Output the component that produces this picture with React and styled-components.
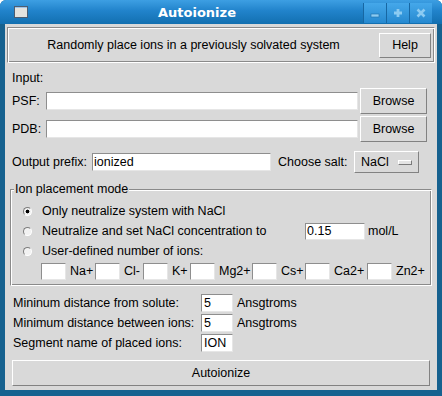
import React from "react";
import styled, { createGlobalStyle, css } from "styled-components";

const GlobalStyle = createGlobalStyle`
  html, body {
    margin: 0;
    padding: 0;
    background: #ffffff;
  }
  body {
    font-family: "Liberation Sans", Arial, sans-serif;
    font-size: 12.5px;
    color: #000;
  }
`;

// tk-like relief helpers
const groove = css`
  border: 1px solid;
  border-color: #8a8a8a #ffffff #ffffff #8a8a8a;
  box-shadow: inset 1px 1px 0 #ffffff, inset -1px -1px 0 #8a8a8a;
`;

const Window = styled.div`
  width: 442px;
  height: 396px;
  display: flex;
  flex-direction: column;
  background: #16618f;
  border-radius: 6px 6px 0 0;
  overflow: hidden;
`;

const TitleBar = styled.div`
  height: 24px;
  flex: none;
  display: flex;
  align-items: center;
  background: linear-gradient(#3d9fe3 0%, #2183cb 45%, #126fb0 100%);
`;

const TitleIcon = styled.span`
  width: 14px;
  height: 12px;
  margin-left: 14px;
  box-sizing: border-box;
  border: 1px solid #4d5d70;
  background: #e3e3df;
  box-shadow: inset 0 1px 0 #9fc3e6;
`;

const Title = styled.div`
  flex: 1;
  text-align: center;
  padding-left: 3px;
  font-family: "DejaVu Sans", sans-serif;
  font-weight: bold;
  font-size: 13px;
  color: #ffffff;
`;

const WinButtons = styled.div`
  display: flex;
  align-self: flex-start;
  margin: 3px 10px 0 0;
`;

const WinButton = styled.span`
  width: 23px;
  height: 20px;
  box-sizing: border-box;
  border-left: 1px solid #1767a3;
  display: flex;
  align-items: center;
  justify-content: center;
  background: linear-gradient(#45a8ea, #2689d0);
  color: #8ccbf2;
`;

const Body = styled.div`
  flex: 1;
  margin: 0 5px 6px;
  background: #d9d9d9;
  display: flex;
  flex-direction: column;
`;

const TopFrame = styled.div`
  ${groove};
  height: 36px;
  box-sizing: border-box;
  margin: 3px 2px 0;
  display: flex;
  align-items: center;
`;

const Description = styled.div`
  flex: 1;
  text-align: center;
`;

const Button = styled.button`
  box-sizing: border-box;
  width: ${(p) => p.$w}px;
  height: ${(p) => p.$h || 26}px;
  padding: 0;
  border: 1px solid;
  border-color: #ffffff #828282 #828282 #ffffff;
  background: #d9d9d9;
  font: inherit;
  color: #000;
`;

const SectionLabel = styled.div`
  margin: 8px 0 0 7px;
  line-height: 14px;
`;

const Row = styled.div`
  display: flex;
  align-items: center;
  height: ${(p) => p.$h || 20}px;
  margin-top: ${(p) => p.$mt || 0}px;
  padding-left: ${(p) => p.$pl || 0}px;
`;

const Label = styled.span`
  width: ${(p) => (p.$w ? `${p.$w}px` : "auto")};
  margin-left: ${(p) => p.$ml || 0}px;
  flex: none;
  white-space: nowrap;
`;

const Entry = styled.input`
  box-sizing: border-box;
  width: ${(p) => p.$w}px;
  height: ${(p) => p.$h || 18}px;
  margin: 0;
  padding: 0 ${(p) => p.$pad || 1}px;
  border: 1px solid;
  border-color: #8e8e8e #e6e6e6 #e6e6e6 #8e8e8e;
  background: #ffffff;
  font: inherit;
  color: #000;
  outline: none;
`;

const MenuButton = styled.div`
  box-sizing: border-box;
  width: 65px;
  height: 22px;
  padding: 0 6px;
  display: flex;
  align-items: center;
  justify-content: space-between;
  border: 1px solid;
  border-color: #ffffff #828282 #828282 #ffffff;
`;

const MenuIndicator = styled.span`
  width: 14px;
  height: 5px;
  box-sizing: border-box;
  border: 1px solid;
  border-color: #ffffff #7a7a7a #7a7a7a #ffffff;
  background: #e4e4e4;
`;

const LabelFrame = styled.div`
  ${groove};
  position: relative;
  box-sizing: border-box;
  width: 422px;
  height: 97px;
  margin: 16px 0 0 5px;
  padding-top: 11px;
`;

const Legend = styled.span`
  position: absolute;
  top: -8px;
  left: 3px;
  padding: 0 1px;
  line-height: 14px;
  background: #d9d9d9;
`;

const Radio = styled.span`
  width: 9px;
  height: 9px;
  box-sizing: border-box;
  flex: none;
  margin-right: 10px;
  border-radius: 50%;
  border: 1px solid;
  border-color: #7c7c7c #ffffff #ffffff #7c7c7c;
  background: ${(p) =>
    p.$on
      ? "radial-gradient(circle, #000 0 1.6px, #f2f2f2 2.2px)"
      : "#f2f2f2"};
`;

const IonBox = styled.span`
  display: flex;
  align-items: center;
  width: ${(p) => p.$w}px;
  flex: none;
`;

const IonName = styled.span`
  margin-left: 4px;
`;

const Minus = () => (
  <svg width="10" height="10" viewBox="0 0 10 10">
    <rect x="1" y="6" width="8" height="3" fill="currentColor" stroke="#1c6ea9" strokeWidth="0.6" />
  </svg>
);

const Plus = () => (
  <svg width="10" height="10" viewBox="0 0 10 10">
    <path d="M5 1v8M1 5h8" stroke="currentColor" strokeWidth="2.8" />
  </svg>
);

const Cross = () => (
  <svg width="10" height="10" viewBox="0 0 10 10">
    <path d="M1.5 1.5l7 7M8.5 1.5l-7 7" stroke="currentColor" strokeWidth="2.6" />
  </svg>
);

const ions = [
  { name: "Na+", w: 54 },
  { name: "Cl-", w: 48 },
  { name: "K+", w: 47 },
  { name: "Mg2+", w: 62 },
  { name: "Cs+", w: 53 },
  { name: "Ca2+", w: 62 },
  { name: "Zn2+", w: 56 },
];

const App = () => {
  return (
    <Window>
      <GlobalStyle />
      <TitleBar>
        <TitleIcon />
        <Title>Autoionize</Title>
        <WinButtons>
          <WinButton>
            <Minus />
          </WinButton>
          <WinButton>
            <Plus />
          </WinButton>
          <WinButton>
            <Cross />
          </WinButton>
        </WinButtons>
      </TitleBar>

      <Body>
        {/* header with description and help */}
        <TopFrame>
          <Description>Randomly place ions in a previously solvated system</Description>
          <Button $w={52} $h={25} style={{ marginRight: 3 }}>
            Help
          </Button>
        </TopFrame>

        <SectionLabel>Input:</SectionLabel>
        <Row $h={26} $mt={3} $pl={7}>
          <Label $w={34}>PSF:</Label>
          <Entry $w={312} />
          <Button $w={67} style={{ marginLeft: 2 }}>
            Browse
          </Button>
        </Row>
        <Row $h={26} $mt={2} $pl={7}>
          <Label $w={34}>PDB:</Label>
          <Entry $w={312} />
          <Button $w={67} style={{ marginLeft: 2 }}>
            Browse
          </Button>
        </Row>

        <Row $h={22} $mt={9} $pl={7}>
          <Label $w={80}>Output prefix:</Label>
          <Entry $w={179} defaultValue="ionized" />
          <Label $w={76} $ml={7}>
            Choose salt:
          </Label>
          <MenuButton>
            NaCl
            <MenuIndicator />
          </MenuButton>
        </Row>

        {/* ion placement mode */}
        <LabelFrame>
          <Legend>Ion placement mode</Legend>
          <Row $pl={12}>
            <Radio $on />
            <Label>Only neutralize system with NaCl</Label>
          </Row>
          <Row $pl={12}>
            <Radio />
            <Label $w={263}>Neutralize and set NaCl concentration to</Label>
            <Entry $w={60} $h={17} defaultValue="0.15" />
            <Label $ml={3}>mol/L</Label>
          </Row>
          <Row $pl={12}>
            <Radio />
            <Label>User-defined number of ions:</Label>
          </Row>
          <Row $pl={30}>
            {ions.map((ion) => (
              <IonBox key={ion.name} $w={ion.w}>
                <Entry $w={25} $h={17} />
                <IonName>{ion.name}</IonName>
              </IonBox>
            ))}
          </Row>
        </LabelFrame>

        <Row $mt={7} $pl={8}>
          <Label $w={188}>Mininum distance from solute:</Label>
          <Entry $w={32} $pad={2} defaultValue="5" />
          <Label $ml={4}>Ansgtroms</Label>
        </Row>
        <Row $pl={8}>
          <Label $w={188}>Minimum distance between ions:</Label>
          <Entry $w={32} $pad={2} defaultValue="5" />
          <Label $ml={4}>Ansgtroms</Label>
        </Row>
        <Row $pl={8}>
          <Label $w={188}>Segment name of placed ions:</Label>
          <Entry $w={32} $pad={2} defaultValue="ION" />
        </Row>

        <Button $w={418} style={{ margin: "7px 0 0 7px" }}>
          Autoionize
        </Button>
      </Body>
    </Window>
  );
};

export default App;
